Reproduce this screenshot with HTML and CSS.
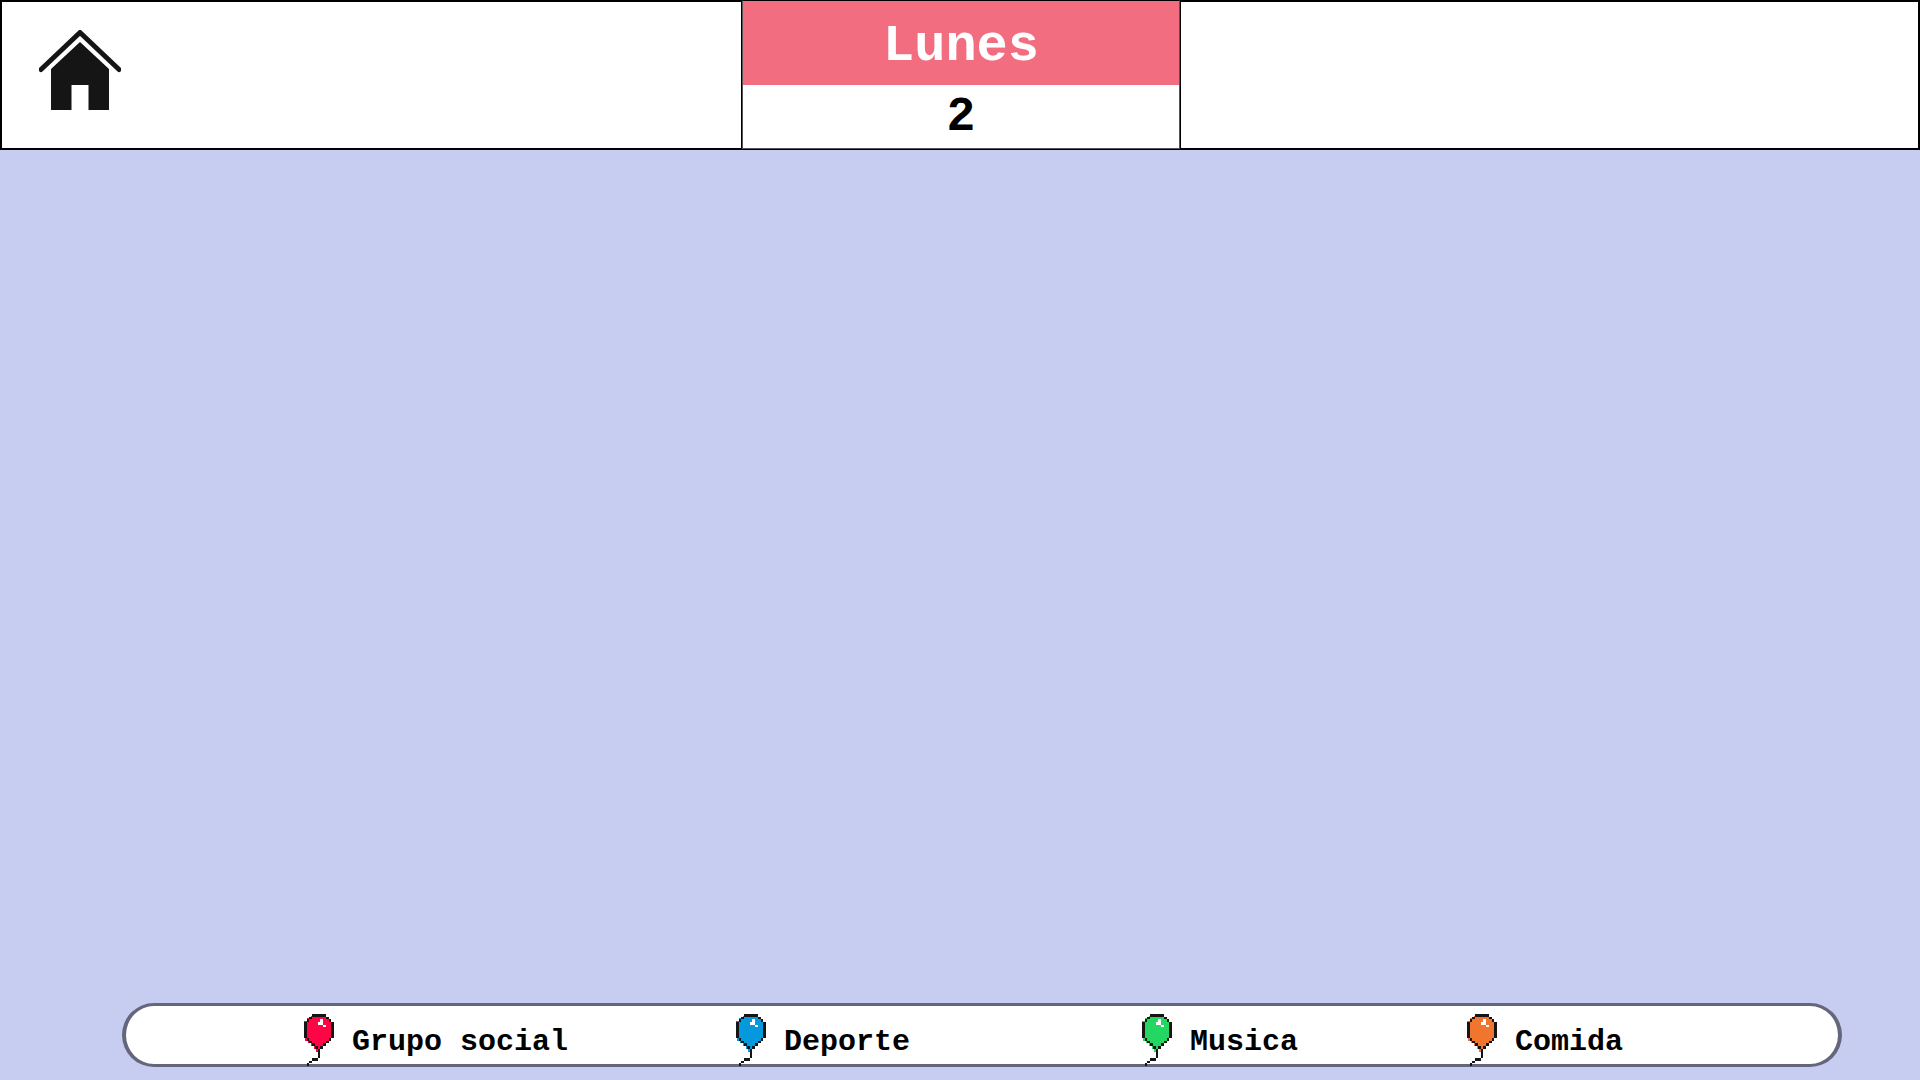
FILE: index.html
```html
<!DOCTYPE html>
<html lang="es">
<head>
<meta charset="utf-8">
<title>Lunes 2</title>
<link rel="stylesheet" href="styles.css">
</head>
<body>
<svg class="sprites" aria-hidden="true">
  <symbol id="balloon" viewBox="0 0 11 19.4" preserveAspectRatio="none">
    <path fill="currentColor" d="M3 .5h5v1h1v1h1v6.500h-.5v1h-1v1h-1v1h-1v1h-1v1h-1v-1h-1v-1h-1v-1h-1v-1h-1v-1h-.5v-6.500h1v-1h1z"/>
    <path fill="#151515" d="M3 0h5v1h-5zM2 1h1v1h-1zM8 1h1v1h-1zM1 2h1v1h-1zM9 2h1v1h-1zM0 3h1v6h-1zM10 3h1v6h-1zM1 9h1v1h-1zM9 9h1v1h-1zM2 10h1v1h-1zM8 10h1v1h-1zM3 11h1v1h-1zM7 11h1v1h-1zM4 12h1v1h-1zM6 12h1v1h-1zM5 13h1v3.400h-1zM3 16.400h2v1h-2zM2 17.400h1v1h-1zM1 18.400h1v1h-1z"/>
    <path fill="#fff" d="M6 2h1v2h-2v-1h1zM7 4h1v1h-1z"/>
  </symbol>
</svg>
<header class="header">
  <a class="home" href="#" aria-label="Inicio">
    <svg class="home-icon" viewBox="0 0 82 80">
      <path d="M2 39.500L41 2.500l39 37" fill="none" stroke="#151515" stroke-width="5" stroke-linecap="round" stroke-linejoin="round"/>
      <path d="M12 39L41 12l29 27v41H49.500V55h-17v25H12z" fill="#151515"/>
    </svg>
  </a>
  <div class="day">
    <h1 class="day-name">Lunes</h1>
    <p class="day-number">2</p>
  </div>
</header>
<main class="board"></main>
<footer class="legend">
  <div class="category"><svg class="balloon red"><use href="#balloon"/></svg><span>Grupo social</span></div>
  <div class="category"><svg class="balloon blue"><use href="#balloon"/></svg><span>Deporte</span></div>
  <div class="category"><svg class="balloon green"><use href="#balloon"/></svg><span>Musica</span></div>
  <div class="category"><svg class="balloon orange"><use href="#balloon"/></svg><span>Comida</span></div>
</footer>
</body>
</html>
```
FILE: styles.css
```css
* { box-sizing: border-box; }

body {
  margin: 0;
  min-height: 100vh;
  display: flex;
  flex-direction: column;
  background: #c7cdf1;
  color: #000;
  font-family: "Liberation Mono", "Courier New", monospace;
  font-weight: 700;
}

.sprites { display: none; }

.header {
  display: grid;
  grid-template-columns: 1fr 438px 1fr;
  padding-left: 2px;
  background: #fff;
  border: 2px solid #000;
}

.home {
  justify-self: start;
  padding: 28px 35px 38px;
}

.home-icon {
  display: block;
  width: 82px;
  height: 80px;
}

.day {
  margin: -2px 0 -1px;
  border: 1px solid #555;
  border-top-color: #000;
  outline: 1px solid #000;
  text-align: center;
}

.day-name {
  margin: 0;
  padding-top: 8px;
  background: #f26d7f;
  color: #fff;
  font-size: 52px;
  line-height: 76px;
}

.day-number {
  margin: 0;
  padding-top: 4px;
  font-size: 48px;
  line-height: 56px;
}

.board { flex: 1; }

.legend {
  display: grid;
  grid-template-columns: 432fr 406fr 325fr 371fr;
  margin: 0 78px 13px 122px;
  height: 64px;
  padding-left: 178px;
  background: #fff;
  border: solid #64677b;
  border-width: 3px 4px;
  border-radius: 32px;
}

.category {
  display: flex;
  gap: 18px;
  font-size: 30px;
  line-height: 60px;
  padding-top: 6px;
  white-space: nowrap;
}

.balloon {
  width: 30px;
  height: 52px;
  margin-top: 2px;
  flex: none;
  shape-rendering: crispEdges;
}

.red { color: #ff0546; }
.blue { color: #0399dc; }
.green { color: #24d662; }
.orange { color: #f1752d; }
```
